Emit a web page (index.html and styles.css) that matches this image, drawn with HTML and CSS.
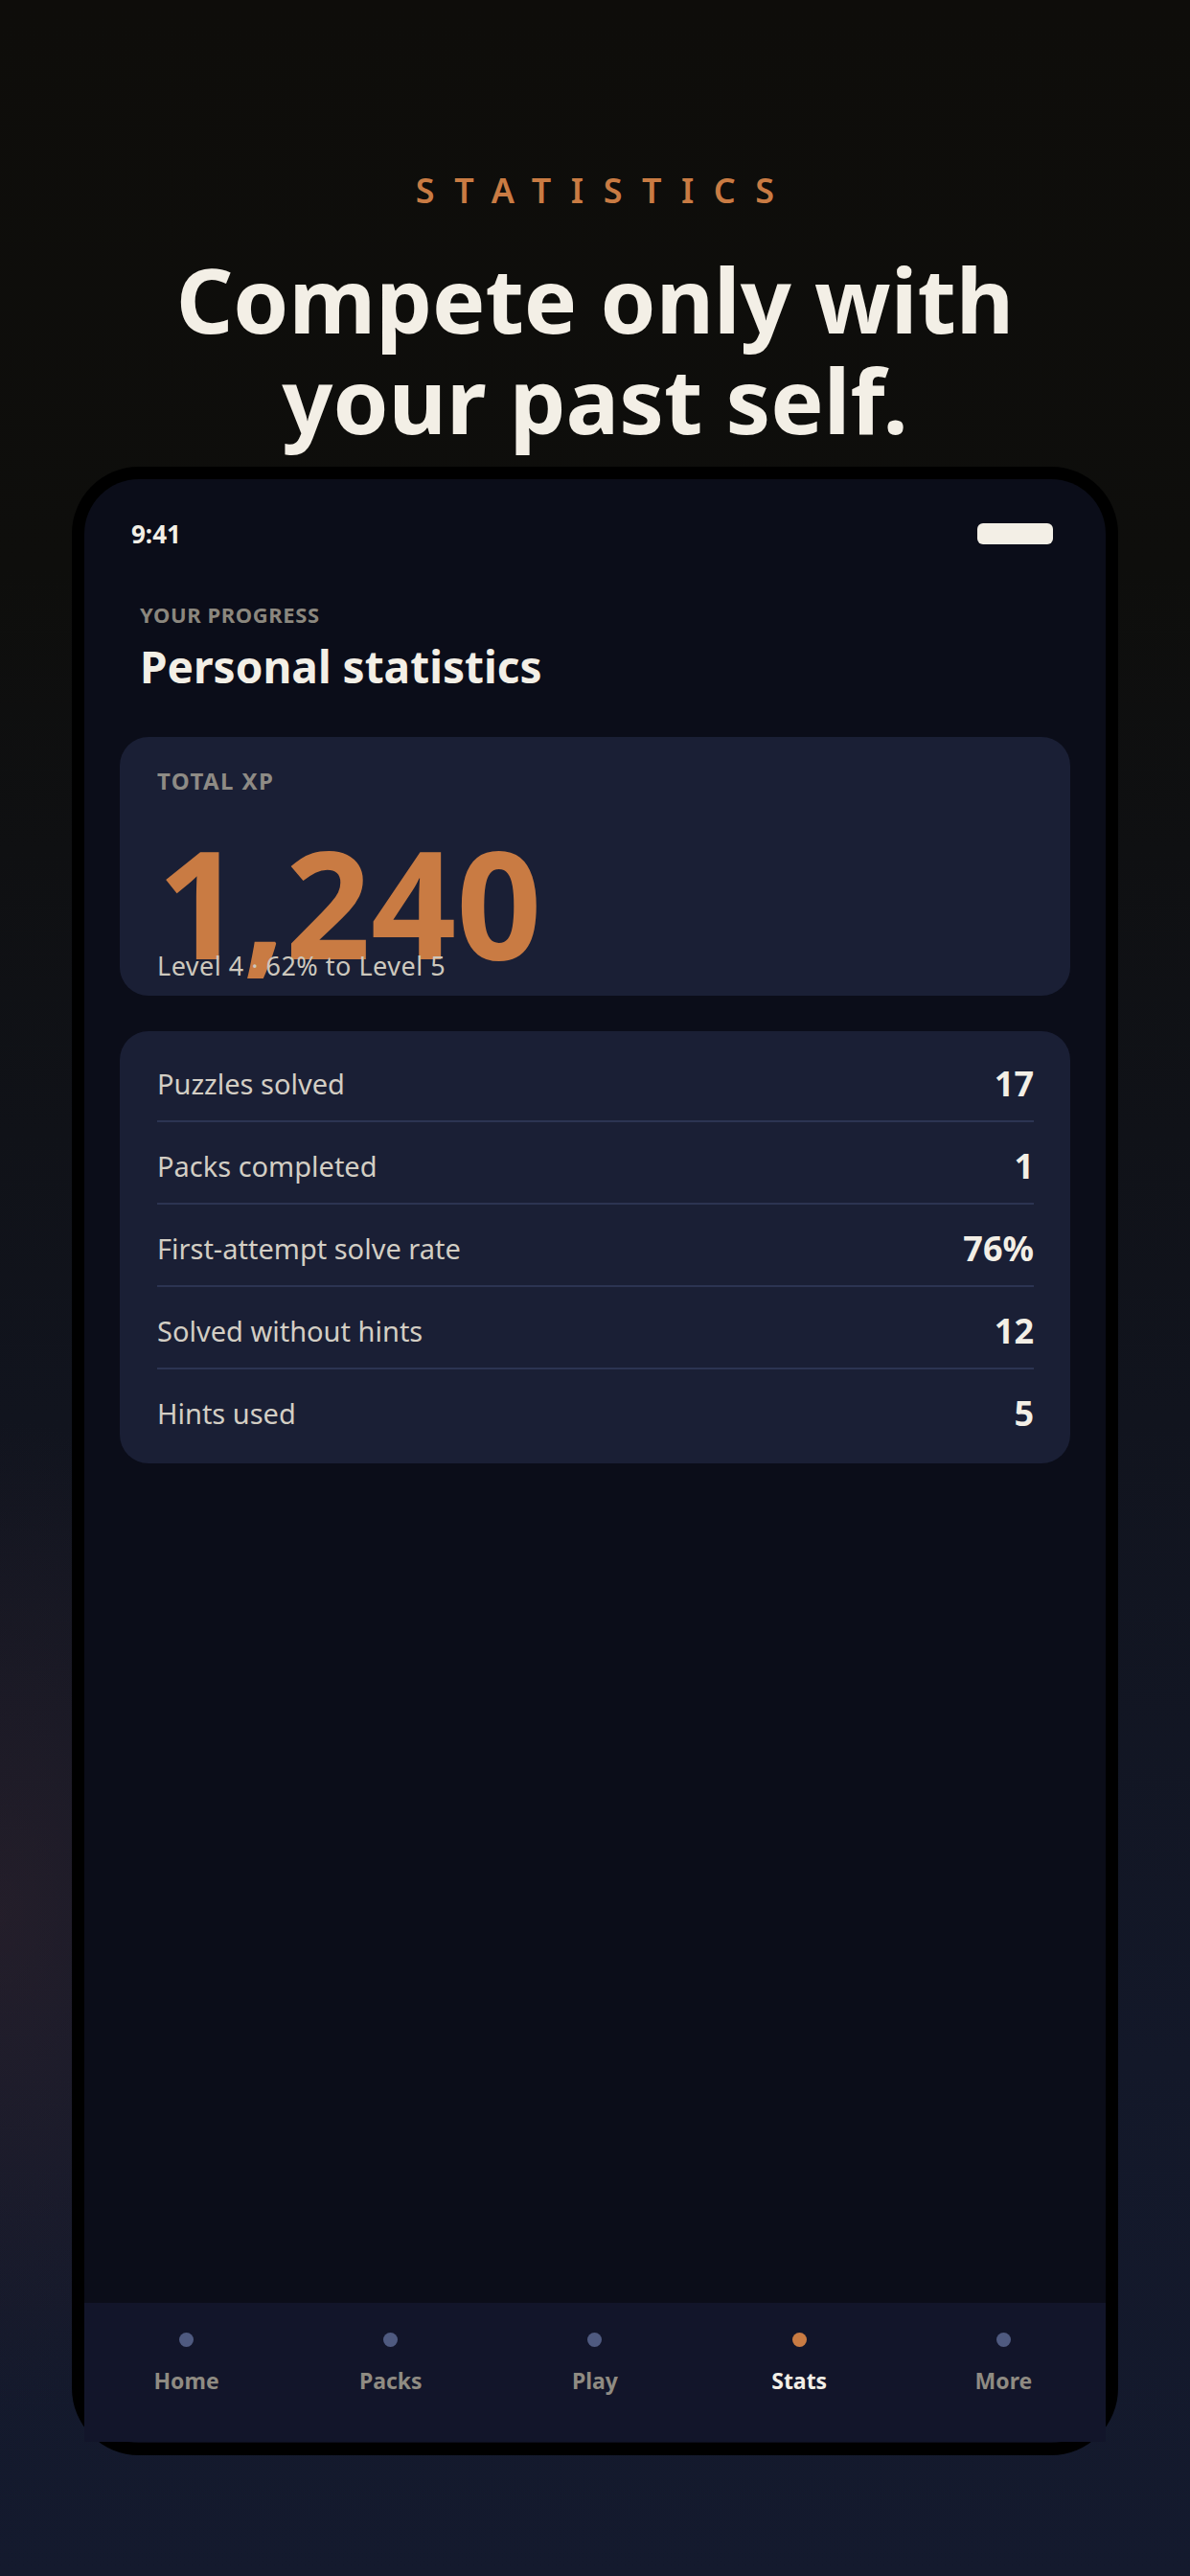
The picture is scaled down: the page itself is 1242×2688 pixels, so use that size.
FILE: index.html
```html
<!DOCTYPE html>
<html lang="en">
<head>
  <meta charset="UTF-8">
  <meta name="viewport" content="width=device-width, initial-scale=1.0">
  <title>Statistics</title>
  <link rel="stylesheet" href="styles.css">
</head>
<body>

  <header class="intro">
    <p class="eyebrow">STATISTICS</p>
    <h1>Compete only with<br>your past self.</h1>
  </header>

  <div class="phone">
    <div class="screen">

      <div class="status">
        <span class="clock">9:41</span>
        <span class="battery"></span>
      </div>

      <main class="content">
        <p class="kicker">YOUR PROGRESS</p>
        <h2>Personal statistics</h2>

        <section class="card xp">
          <p class="xp-label">TOTAL XP</p>
          <p class="xp-value">1,240</p>
          <p class="xp-level">Level 4 · 62% to Level 5</p>
        </section>

        <section class="card list">
          <div class="row"><span>Puzzles solved</span><strong>17</strong></div>
          <div class="row"><span>Packs completed</span><strong>1</strong></div>
          <div class="row"><span>First-attempt solve rate</span><strong>76%</strong></div>
          <div class="row"><span>Solved without hints</span><strong>12</strong></div>
          <div class="row"><span>Hints used</span><strong>5</strong></div>
        </section>
      </main>

      <nav class="tabs">
        <div class="tab"><i class="dot"></i>Home</div>
        <div class="tab"><i class="dot"></i>Packs</div>
        <div class="tab"><i class="dot"></i>Play</div>
        <div class="tab active"><i class="dot"></i>Stats</div>
        <div class="tab"><i class="dot"></i>More</div>
      </nav>

    </div>
  </div>

</body>
</html>
```

FILE: styles.css
```css
* {
  box-sizing: border-box;
}

html, body {
  margin: 0;
  height: 2688px;
}

body {
  font-family: "Noto Sans", "Open Sans", sans-serif;
  color: #f3efe6;
  background:
    radial-gradient(ellipse 300px 520px at 0 2000px, rgba(56, 38, 46, 0.45), rgba(56, 38, 46, 0) 100%),
    linear-gradient(180deg, #0e0d0a 0%, #0e0e0c 22%, #11141e 55%, #131829 80%, #141a2e 100%);
  overflow: hidden;
}

p, h1, h2 {
  margin: 0;
}

/* top copy */
.intro {
  padding-top: 177px;
  text-align: center;
}

.eyebrow {
  font-size: 36px;
  line-height: 44px;
  font-weight: 600;
  letter-spacing: 0.57em;
  padding-left: 0.57em;
  color: #c97b43;
}

h1 {
  margin-top: 39px;
  font-size: 93px;
  line-height: 105px;
  font-weight: 700;
}

/* device */
.phone {
  margin: 17px auto 0;
  width: 1092px;
  height: 2075px;
  padding: 13px;
  background: #000;
  border-radius: 70px;
}

.screen {
  height: 100%;
  background: #0b0d19;
  border-radius: 57px;
  display: flex;
  flex-direction: column;
}

.status {
  display: flex;
  justify-content: space-between;
  align-items: center;
  height: 30px;
  margin-top: 42px;
  padding: 0 55px 0 49px;
}

.clock {
  font-size: 26px;
  line-height: 30px;
  font-weight: 700;
}

.battery {
  width: 79px;
  height: 22px;
  border-radius: 6px;
  background: #f3efe6;
}

.content {
  flex: 1;
  padding: 0 37px;
}

.kicker {
  margin: 55px 0 0 21px;
  font-size: 22px;
  line-height: 28px;
  font-weight: 700;
  letter-spacing: 0.6px;
  color: #8b877e;
}

h2 {
  margin: 12px 0 0 21px;
  font-size: 46px;
  line-height: 56px;
  font-weight: 700;
}

.card {
  background: #1a1f35;
  border-radius: 30px;
}

.xp {
  margin-top: 46px;
  padding: 31px 39px 14px;
}

.xp-label {
  font-size: 24px;
  line-height: 30px;
  font-weight: 700;
  letter-spacing: 1.4px;
  color: #8e8b85;
}

.xp-value {
  margin-top: 61px;
  font-size: 156px;
  line-height: 100px;
  font-weight: 700;
  color: #c97b43;
}

.xp-level {
  position: relative;
  font-size: 27px;
  line-height: 34px;
  letter-spacing: 0.5px;
  color: #cdc8be;
}

.list {
  margin-top: 37px;
  padding: 9px 38px 14px 39px;
}

.row {
  display: flex;
  justify-content: space-between;
  align-items: center;
  padding: 26px 0 18px;
  border-bottom: 2px solid #2c3452;
}

.row:last-child {
  border-bottom: none;
}

.row span {
  font-size: 29px;
  line-height: 40px;
  color: #d3cec4;
}

.row strong {
  font-size: 36px;
  line-height: 40px;
  font-weight: 700;
  color: #f3efe6;
}

/* bottom nav */
.tabs {
  display: grid;
  grid-template-columns: repeat(5, 1fr);
  height: 145px;
  margin-bottom: 1px;
  background: #12152a;
  padding-top: 31px;
}

.tab {
  display: flex;
  flex-direction: column;
  align-items: center;
  gap: 20px;
  font-size: 23px;
  line-height: 30px;
  font-weight: 700;
  color: #8f8b82;
}

.dot {
  width: 15px;
  height: 15px;
  border-radius: 50%;
  background: #4f5a80;
}

.tab.active {
  color: #f3efe6;
}

.tab.active .dot {
  background: #c97b43;
}
```
